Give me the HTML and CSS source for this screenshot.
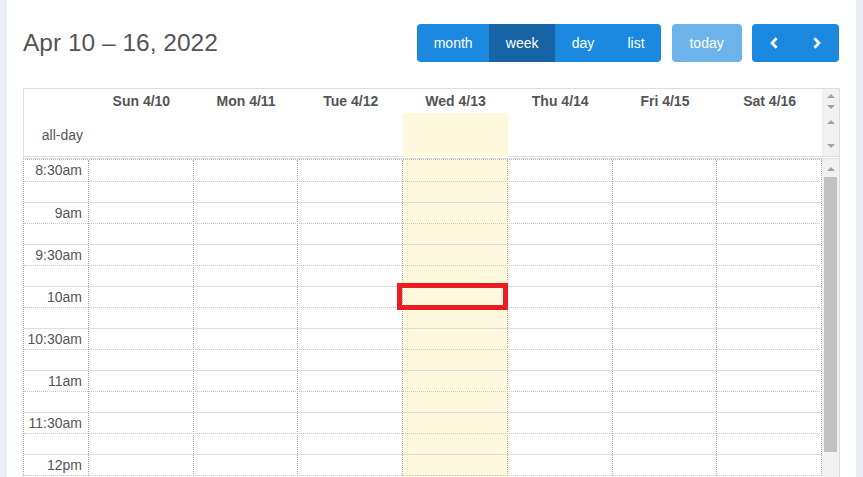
FILE: index.html
```html
<!DOCTYPE html>
<html lang="en">
<head>
<meta charset="utf-8">
<title>Calendar week</title>
<link rel="stylesheet" href="styles.css">
</head>
<body>
<div class="panel">
  <div class="toolbar">
    <h2 class="title">Apr 10 – 16, 2022</h2>
    <div class="tools">
      <div class="btn-group">
        <button class="btn">month</button>
        <button class="btn active">week</button>
        <button class="btn">day</button>
        <button class="btn">list</button>
      </div>
      <button class="btn solo today">today</button>
      <div class="btn-group">
        <button class="btn icon" aria-label="prev"><svg width="8" height="12" viewBox="0 0 8 12"><polyline points="6.6,1.2 2,6 6.6,10.8" fill="none" stroke="#fff" stroke-width="2.7"/></svg></button>
        <button class="btn icon" aria-label="next"><svg width="8" height="12" viewBox="0 0 8 12"><polyline points="1.4,1.2 6,6 1.4,10.8" fill="none" stroke="#fff" stroke-width="2.7"/></svg></button>
      </div>
    </div>
  </div>

  <div class="cal">
    <div class="cal-head">
      <div class="head-main">
        <div class="day-row">
          <div class="axis"></div>
          <div class="dh">Sun 4/10</div>
          <div class="dh">Mon 4/11</div>
          <div class="dh">Tue 4/12</div>
          <div class="dh">Wed 4/13</div>
          <div class="dh">Thu 4/14</div>
          <div class="dh">Fri 4/15</div>
          <div class="dh">Sat 4/16</div>
        </div>
        <div class="allday-row">
          <div class="axis label">all-day</div>
          <div></div><div></div><div></div>
          <div class="today-bg"></div>
          <div></div><div></div><div></div>
        </div>
      </div>
      <div class="head-scroll">
        <div class="sb sb-days"><span class="arr up"></span><span class="arr down"></span></div>
        <div class="sb sb-allday"><span class="arr up"></span><span class="arr down"></span></div>
      </div>
    </div>
    <div class="divider"></div>
    <div class="cal-body">
      <div class="body-main">
        <div class="cols">
          <div class="col axis-col"></div>
          <div class="col"></div><div class="col"></div><div class="col"></div>
          <div class="col today-bg"></div>
          <div class="col"></div><div class="col"></div><div class="col"></div>
        </div>
        <div class="slats">
          <div class="slat first"><span class="time">8:30am</span></div>
          <div class="slat"></div>
          <div class="slat major"><span class="time">9am</span></div>
          <div class="slat"></div>
          <div class="slat major"><span class="time">9:30am</span></div>
          <div class="slat"></div>
          <div class="slat major"><span class="time">10am</span></div>
          <div class="slat"></div>
          <div class="slat major"><span class="time">10:30am</span></div>
          <div class="slat"></div>
          <div class="slat major"><span class="time">11am</span></div>
          <div class="slat"></div>
          <div class="slat major"><span class="time">11:30am</span></div>
          <div class="slat"></div>
          <div class="slat major"><span class="time">12pm</span></div>
          <div class="slat"></div>
        </div>
        <div class="mark"></div>
      </div>
      <div class="body-scroll">
        <span class="arr up"></span>
        <div class="thumb"></div>
      </div>
    </div>
  </div>
</div>
</body>
</html>
```

FILE: styles.css
```css
html, body {
  margin: 0;
  padding: 0;
  height: 477px;
  overflow: hidden;
  background: #eaeef3;
}

.panel {
  margin: 0 7px;
  padding: 0 17px 0 16px;
  height: 477px;
  background: #fff;
  font-family: "Liberation Sans", Arial, sans-serif;
  color: #555;
}

.toolbar {
  display: flex;
  justify-content: space-between;
  align-items: center;
  padding-top: 24px;
  margin-bottom: 26px;
  height: 38px;
}

.title {
  margin: 0;
  font-size: 24.5px;
  font-weight: normal;
  line-height: 38px;
  color: #555;
}

.tools {
  display: flex;
  align-items: center;
  gap: 10.5px;
}

.btn-group {
  display: flex;
}

.btn {
  height: 38px;
  border: 0;
  margin: 0;
  padding: 0 16.6px;
  background: #1a89df;
  color: #fff;
  font-family: "Liberation Sans", Arial, sans-serif;
  font-size: 14px;
  line-height: 38px;
  cursor: pointer;
}

.btn-group .btn:first-child {
  border-radius: 4px 0 0 4px;
}

.btn-group .btn:last-child {
  border-radius: 0 4px 4px 0;
}

.btn.active {
  background: #1664a6;
}

.btn.solo {
  border-radius: 4px;
}

.btn.today {
  background: #6cb2eb;
  padding: 0 17.8px;
}

.btn.icon {
  width: 43.5px;
  padding: 0;
  display: flex;
  align-items: center;
  justify-content: center;
}

.btn.icon svg {
  display: block;
}

/* calendar */
.cal {
  width: 817px;
}

.cal-head {
  display: flex;
  border: 1px solid #ddd;
}

.head-main {
  flex: 1;
}

.day-row,
.allday-row {
  display: grid;
  grid-template-columns: 65px repeat(7, 1fr);
}

.day-row {
  height: 24px;
}

.dh {
  font-weight: bold;
  font-size: 14px;
  line-height: 24px;
  text-align: center;
  color: #555;
}

.allday-row {
  height: 43px;
}

.label {
  font-size: 14px;
  line-height: 43px;
  padding-top: 1px;
  box-sizing: border-box;
  text-align: right;
  padding-right: 6px;
  color: #555;
}

.today-bg {
  background: #fef8dd;
}

.head-scroll {
  width: 17px;
  background: #f1f1f1;
  display: flex;
  flex-direction: column;
}

.sb {
  display: flex;
  flex-direction: column;
  align-items: center;
  justify-content: space-between;
  box-sizing: border-box;
}

.sb-days {
  height: 24px;
  padding: 5px 0 4px;
}

.sb-allday {
  height: 43px;
  padding: 7px 0 8px;
}

.arr {
  display: block;
  width: 0;
  height: 0;
  border-left: 4px solid transparent;
  border-right: 4px solid transparent;
}

.arr.up {
  border-bottom: 4px solid #a3a3a3;
}

.arr.down {
  border-top: 4px solid #a3a3a3;
}

.divider {
  height: 1px;
  border-left: 1px solid #ddd;
  border-right: 1px solid #ddd;
  border-bottom: 1px solid #ddd;
}

.cal-body {
  display: flex;
  border-right: 1px solid #ddd;
}

.body-main {
  position: relative;
  flex: 1;
  border-left: 1px dotted #aaa;
  border-top: 1px dotted #bbb;
}

.cols {
  position: absolute;
  inset: 0;
  display: grid;
  grid-template-columns: 65px repeat(7, 1fr);
}

.col {
  border-right: 1px dotted #aaa;
}

.slats {
  position: relative;
}

.slat {
  box-sizing: border-box;
  height: 21px;
  border-top: 1px dotted #c8c8c8;
}

.slat.first {
  border-top: 0;
}

.slat.major {
  border-top: 1px solid #ddd;
}

.time {
  display: block;
  width: 64px;
  box-sizing: border-box;
  padding-right: 6px;
  text-align: right;
  font-size: 14px;
  line-height: 20px;
  color: #555;
}

.slat.first .time {
  line-height: 21px;
}

.mark {
  position: absolute;
  left: 373px;
  top: 123px;
  width: 111px;
  height: 27px;
  box-sizing: border-box;
  border: 5px solid #ec1c24;
}

.body-scroll {
  width: 17px;
  background: #f1f1f1;
  display: flex;
  flex-direction: column;
  align-items: center;
  padding-top: 8px;
}

.thumb {
  width: 13px;
  height: 275px;
  margin-top: 6px;
  background: #c1c1c1;
}
```
